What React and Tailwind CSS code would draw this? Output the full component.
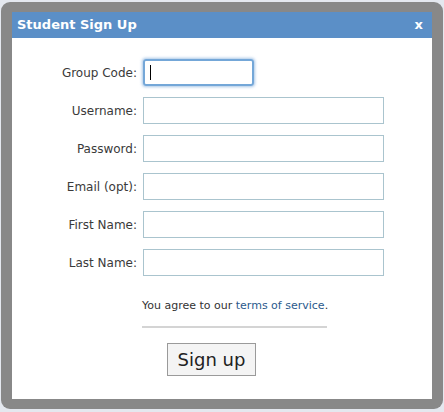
export default function App() {
  const rows = [
    ["Group Code:", true],
    ["Username:"],
    ["Password:"],
    ["Email (opt):"],
    ["First Name:"],
    ["Last Name:"],
  ];
  return (
    <div
      className="w-[444px] h-[412px] bg-[#e4e8ef] pt-[2px] pl-[1px] overflow-hidden"
      style={{ fontFamily: '"DejaVu Sans", "Liberation Sans", sans-serif' }}
    >
      <div className="w-[442px] h-[407px] bg-[#888888] rounded-[9px] pt-[10px] pb-[10px] pl-[11px] pr-[11px] flex flex-col">
        <div className="h-[26px] bg-[#5b8fc7] flex items-center justify-between pl-[5px] pr-[9px] text-white font-bold">
          <span className="text-[13px]">Student Sign Up</span>
          <span className="text-[13px]">x</span>
        </div>
        <div className="flex-1 bg-white flex flex-col pt-[21px]">
          <div className="flex flex-col gap-[11px]">
            {rows.map(([label, focus]) => (
              <div key={label} className="flex items-center h-[27px]">
                <div className="w-[125px] text-right text-[12px] text-[#3a3a3a]">{label}</div>
                <div className="pl-[6px]">
                  {focus ? (
                    <div className="w-[111px] h-[27px] border-2 border-[#74a7d8] rounded-[3px] shadow-[0_0_3px_1px_rgba(110,160,215,0.6)] flex items-center pl-[5px]">
                      <div className="w-[1px] h-[15px] bg-black" />
                    </div>
                  ) : (
                    <div className="w-[241px] h-[27px] border border-[#aac4ce]" />
                  )}
                </div>
              </div>
            ))}
          </div>
          <div className="pl-[130px] pt-[22px] text-[11px] text-[#333]">
            You agree to our <span className="text-[#2b5a8c]">terms of service</span>.
          </div>
          <div className="ml-[130px] mt-[11px] w-[185px] h-[2px] bg-[#d4d4d4]" />
          <div className="pl-[155px] pt-[15px]">
            <div className="w-[89px] h-[33px] border border-[#9a9a9a] bg-[#f4f4f4] flex items-center justify-center text-[18px] text-[#222]">
              Sign up
            </div>
          </div>
        </div>
      </div>
    </div>
  );
}
